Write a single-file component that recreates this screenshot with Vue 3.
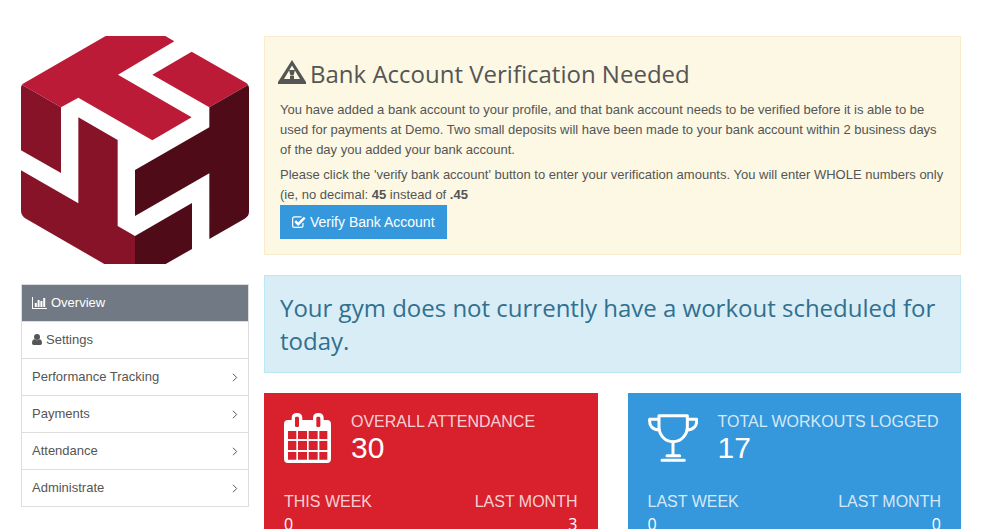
<script setup>
import { ref } from 'vue'

const active = ref('Overview')

const menu = [
    { label: 'Overview', icon: 'chart' },
    { label: 'Settings', icon: 'user' },
    { label: 'Performance Tracking', children: true },
    { label: 'Payments', children: true },
    { label: 'Attendance', children: true },
    { label: 'Administrate', children: true }
]

const stats = [
    {
        title: 'Overall Attendance',
        total: 30,
        color: 'red',
        icon: 'calendar',
        periods: [
            { label: 'This Week', value: 0 },
            { label: 'Last Month', value: 3 }
        ]
    },
    {
        title: 'Total Workouts Logged',
        total: 17,
        color: 'blue',
        icon: 'trophy',
        periods: [
            { label: 'Last Week', value: 0 },
            { label: 'Last Month', value: 0 }
        ]
    }
]
</script>

<template>
    <div class="page">
        <aside class="sidebar">
            <svg class="logo" viewBox="33 33 684 684" role="img" aria-label="Gym logo">
                <path fill="#bc1b38" d="M287 33H466L493 49L324 149L545 277L427 346L205 218L153 247L36 179Q38 176 44 173Z" />
                <path fill="#bc1b38" d="M545 80L708 173Q713 176 714 180L598 247L427 149Z" />
                <path fill="#871328" d="M36 179L153 247V444L33 376V188Q33 183 36 179Z" />
                <path fill="#871328" d="M33 436L205 535V277L323 345V603L375 633V717H283L48 581Q33 572 33 557Z" />
                <path fill="#4f0c18" d="M598 247L714 180Q717 184 717 190V560Q717 573 704 581L598 642V445L375 573V435L598 307Z" />
                <path fill="#4f0c18" d="M375 633L546 534V672L467 717H375Z" />
            </svg>

            <nav class="menu">
                <a v-for="item in menu" :key="item.label" href="#" class="menu-item"
                    :class="{ active: active === item.label }" @click.prevent="active = item.label">
                    <svg v-if="item.icon === 'chart'" width="15" height="12" viewBox="0 0 15 12">
                        <path fill="currentColor"
                            d="M0 0h1v11h14v1H0zM2.800 6h2v4h-2zM5.600 3h2v7h-2zM8.400 4h2v6h-2zM11.200 1h2v9h-2z" />
                    </svg>
                    <svg v-if="item.icon === 'user'" width="10" height="12" viewBox="0 0 10 12">
                        <path fill="currentColor"
                            d="M5 0C7 0 8 1.300 8 3S7 6 5 6 2 4.700 2 3 3 0 5 0zM2.200 5.200Q5 7.400 7.800 5.200C9.500 5.500 10 7.500 10 9.200Q10 11 8.300 11H1.700Q0 11 0 9.200C0 7.500.5 5.500 2.200 5.200z" />
                    </svg>
                    <span>{{ item.label }}</span>
                    <svg v-if="item.children" class="chevron" width="6" height="9" viewBox="0 0 6 9">
                        <path d="M1 .8L4.700 4.500L1 8.200" fill="none" stroke="currentColor" />
                    </svg>
                </a>
            </nav>
        </aside>

        <main class="content">
            <section class="alert warning">
                <h3>
                    <svg width="28" height="24" viewBox="0 0 28 24">
                        <path fill="currentColor" fill-rule="evenodd"
                            d="M14 0L28 22V24H0V22ZM14 5.500L6 19H22Z" />
                        <path fill="currentColor" d="M11 10h6l-1.500 5.500h-3zM12 16h4v3h-4z" />
                    </svg>
                    <span>Bank Account Verification Needed</span>
                </h3>
                <p>
                    You have added a bank account to your profile, and that bank account needs to be verified before it
                    is able to be used for payments at Demo. Two small deposits will have been made to your bank account
                    within 2 business days of the day you added your bank account.
                </p>
                <p>
                    Please click the 'verify bank account' button to enter your verification amounts. You will enter
                    WHOLE numbers only (ie, no decimal: <strong>45</strong> instead of <strong>.45</strong>
                </p>
                <button type="button" class="button">
                    <svg width="14" height="12" viewBox="0 0 14 12" fill="none" stroke="currentColor">
                        <path d="M11 7v2.500q0 1.900-1.900 1.900H2.500Q.6 11.400.6 9.500V2.800Q.6.900 2.500.9H9.500" stroke-width="1.200" />
                        <path d="M3.200 5.200L6.200 8.200L12.700 1.700" stroke-width="2.500" />
                    </svg>
                    <span>Verify Bank Account</span>
                </button>
            </section>

            <section class="alert info">
                <h3>Your gym does not currently have a workout scheduled for today.</h3>
            </section>

            <div class="stats">
                <section v-for="stat in stats" :key="stat.title" class="stat" :class="stat.color">
                    <div class="stat-top">
                        <svg v-if="stat.icon === 'calendar'" width="47" height="50" viewBox="57 69 141 150">
                            <path fill="#fff" fill-rule="evenodd"
                                d="M69 90H80V84Q80 69 96 69T112 84V90H144V84Q144 69 160 69T176 84V90H186Q198 90 198 102V207Q198 219 186 219H69Q57 219 57 207V102Q57 90 69 90ZM94 80Q90 80 90 84V107Q90 111 94 111H98Q102 111 102 107V84Q102 80 98 80ZM158 80Q154 80 154 84V107Q154 111 158 111H162Q166 111 166 107V84Q166 80 162 80ZM69 123V147H94V123ZM99 123V147H126V123ZM131 123V147H158V123ZM163 123V147H187V123ZM69 153V180H94V153ZM99 153V180H126V153ZM131 153V180H158V153ZM163 153V180H187V153ZM69 186V209H94V186ZM99 186V209H126V186ZM131 186V209H158V186ZM163 186V209H187V186Z" />
                        </svg>
                        <svg v-else width="50" height="50" viewBox="81 69 150 150" fill="none" stroke="#fff"
                            stroke-width="9" stroke-linecap="round" stroke-linejoin="round">
                            <path d="M114 77H199V112C199 136 179 155 156 155S114 136 114 112Z" />
                            <path d="M112 88H86C84 107 94 119 115 120M201 88H227C229 107 218 119 198 120" />
                            <path d="M156 156V195M138 197H176M123 211H190" />
                        </svg>
                        <div>
                            <div class="label">{{ stat.title }}</div>
                            <div class="total">{{ stat.total }}</div>
                        </div>
                    </div>
                    <div class="stat-bottom">
                        <div v-for="period in stat.periods" :key="period.label">
                            <div class="label">{{ period.label }}</div>
                            <div class="value">{{ period.value }}</div>
                        </div>
                    </div>
                </section>
            </div>
        </main>
    </div>
</template>

<style>
body {
    margin: 0;
    background: #fff;
}
</style>

<style scoped>
.page {
    display: grid;
    grid-template-columns: 228px minmax(0, 1fr);
    align-items: start;
    gap: 15px;
    padding: 36px 42px 0 21px;
    font-family: "Liberation Sans", Arial, sans-serif;
    font-size: 13px;
    line-height: 20px;
    color: #555;
}

svg {
    flex-shrink: 0;
}

.logo {
    display: block;
    width: 100%;
    margin-bottom: 20px;
}

.menu {
    border: 1px solid #ddd;
}

.menu-item {
    display: flex;
    align-items: center;
    gap: 4px;
    padding: 8px 10px;
    color: #555;
    text-decoration: none;
}

.menu-item+.menu-item {
    border-top: 1px solid #ddd;
}

.menu-item.active {
    background: #717984;
    color: #fff;
}

.chevron {
    margin-left: auto;
}

.alert {
    margin-bottom: 20px;
    padding: 15px;
    border: 1px solid;
}

.alert h3 {
    margin: 0;
    font-family: "Open Sans", sans-serif;
    font-size: 24px;
    font-weight: 400;
    line-height: 33px;
}

.alert p {
    margin: 0;
}

.alert p+p {
    margin-top: 5px;
}

.warning {
    background: #fcf8e3;
    border-color: #faebcc;
}

.warning h3 {
    display: flex;
    align-items: flex-start;
    gap: 4px;
    margin: 5px 0 10px -2px;
}

.warning h3 svg {
    margin-top: 3px;
}

.info {
    background: #d9edf7;
    border-color: #bce8f1;
    color: #31708f;
}

.button {
    display: flex;
    align-items: center;
    gap: 4px;
    padding: 7px 12px;
    border: 0;
    background: #3598dc;
    color: #fff;
    font-family: inherit;
    font-size: 14px;
    line-height: 20px;
    cursor: pointer;
}

.stats {
    display: grid;
    grid-template-columns: 1fr 1fr;
    gap: 30px;
}

.stat {
    padding: 20px;
    color: #fff;
}

.red {
    background: #d8212d;
}

.blue {
    background: #3598dc;
}

.stat-top {
    display: flex;
    align-items: flex-start;
    gap: 20px;
    margin-bottom: 28px;
}

.stat-bottom {
    display: flex;
    justify-content: space-between;
}

.stat-bottom>div:last-child {
    text-align: right;
}

.label {
    font-size: 16px;
    line-height: 18px;
    text-transform: uppercase;
    color: rgba(255, 255, 255, 0.8);
}

.total {
    font-size: 30px;
    line-height: 34px;
}

.value {
    font-family: "Open Sans", sans-serif;
    font-size: 16px;
    line-height: 26px;
}
</style>
